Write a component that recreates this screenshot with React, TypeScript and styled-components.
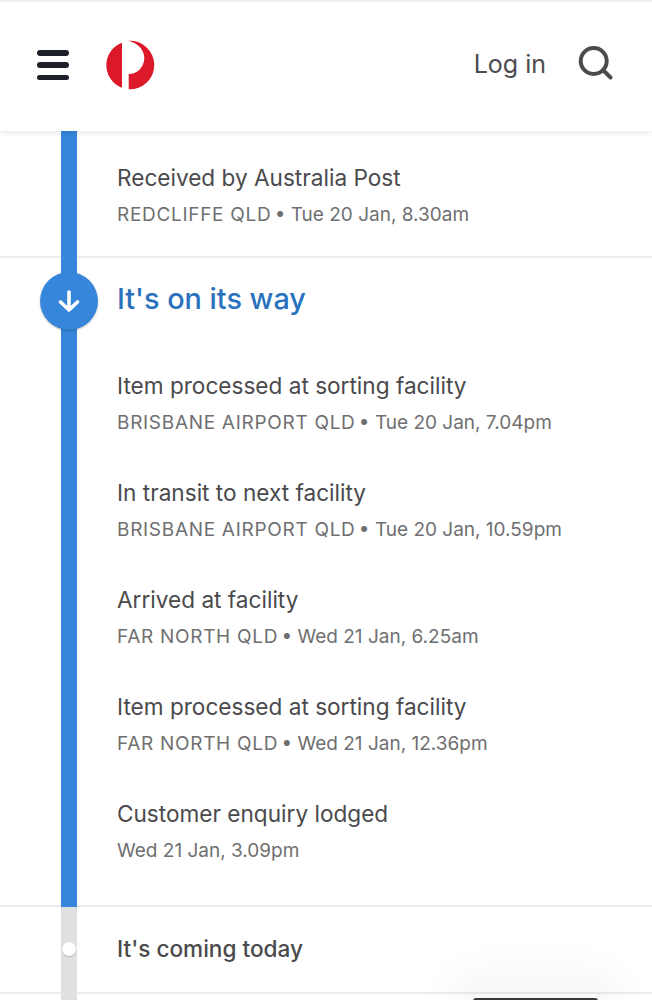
import React from "react";
import styled, { createGlobalStyle } from "styled-components";

const Global = createGlobalStyle`
  html, body { margin: 0; padding: 0; background: #fff; }
  body { font-family: Inter, "Liberation Sans", sans-serif; color: #4a4a4c; }
  #root { width: 652px; height: 1000px; overflow: hidden; position: relative; }
  * { box-sizing: border-box; }
`;

const Page = styled.div`
  width: 652px;
  height: 1000px;
  display: flex;
  flex-direction: column;
  overflow: hidden;
  background: #fff;
`;

const Header = styled.header`
  height: 131px;
  flex: none;
  display: flex;
  align-items: center;
  padding: 0 39px 3px 37px;
  background: #fff;
  border-top: 2px solid #eeeeee;
  box-shadow: 0 2px 6px rgba(0, 0, 0, 0.09);
  position: relative;
  z-index: 2;
`;

const Burger = styled.button`
  width: 32px;
  height: 30px;
  padding: 0;
  border: 0;
  background: none;
  display: flex;
  flex-direction: column;
  justify-content: space-between;
`;

const BurgerBar = styled.span`
  display: block;
  height: 5.5px;
  border-radius: 3px;
  background: #1e2029;
`;

const Logo = styled.svg`
  width: 50px;
  height: 50px;
  margin-left: 36px;
  flex: none;
`;

const HeaderActions = styled.div`
  margin-left: auto;
  margin-bottom: 3px;
  display: flex;
  align-items: center;
  gap: 31px;
`;

const LogIn = styled.span`
  font-size: 25px;
  line-height: 32px;
  color: #4c4c4e;
`;

const SearchIcon = styled.svg`
  width: 36px;
  height: 36px;
  flex: none;
  display: block;
`;

const Section = styled.section<{ $height: number }>`
  display: flex;
  height: ${(p) => p.$height}px;
  flex: none;
  border-bottom: 2px solid #ececec;
`;

const Rail = styled.div<{ $color: string }>`
  width: 16px;
  margin: 0 40px -2px 61px;
  flex: none;
  background: ${(p) => p.$color};
  position: relative;
`;

const RailTail = styled(Rail)`
  flex: 1 0 auto;
`;

const Content = styled.div`
  flex: 1;
  min-width: 0;
  display: flex;
  flex-direction: column;
`;

const Event = styled.div`
  height: 107px;
  flex: none;
  display: flex;
  flex-direction: column;
`;

const EventTitle = styled.div`
  font-size: 22.6px;
  line-height: 30px;
  color: #4a4a4c;
`;

const EventMeta = styled.div`
  margin-top: 8px;
  font-size: 19px;
  line-height: 28px;
  color: #6f6f71;
  white-space: nowrap;
`;

const Place = styled.span`
  letter-spacing: 0.7px;
  margin-right: -2px;
`;

const FirstList = styled.div`
  padding-top: 32px;
`;

const WayList = styled.div`
  padding-top: 113px;
  display: flex;
  flex-direction: column;
  position: relative;
`;

const Heading = styled.h2`
  position: absolute;
  top: 20px;
  left: 0;
  margin: 0;
  font-size: 28.8px;
  line-height: 42px;
  font-weight: 500;
  color: #2a72bd;
`;

const BigMarker = styled.div`
  position: absolute;
  left: -21px;
  top: 14px;
  width: 58px;
  height: 58px;
  border-radius: 50%;
  background: #3686db;
  box-shadow: 0 1px 2px rgba(0, 0, 0, 0.25);
  display: flex;
  align-items: center;
  justify-content: center;
`;

const SmallMarker = styled.div`
  position: absolute;
  left: 1px;
  top: 35px;
  width: 14px;
  height: 14px;
  border-radius: 50%;
  background: #fff;
  box-shadow: 0 1px 1px rgba(0, 0, 0, 0.2);
`;

const TodayContent = styled.div`
  flex: 1;
  display: flex;
  align-items: center;
  padding-bottom: 3px;
  font-size: 22.6px;
  font-weight: 500;
  color: #4a4a4c;
`;

const HomeBar = styled.div`
  position: absolute;
  left: 473px;
  top: 998px;
  width: 125px;
  height: 6px;
  border-radius: 3px;
  background: #3a3a3c;
  box-shadow: 0 -6px 40px 20px rgba(0, 0, 0, 0.04);
`;

type Item = { place?: string; title: string; date: string };

const first: Item = { title: "Received by Australia Post", place: "REDCLIFFE QLD", date: "Tue 20 Jan, 8.30am" };

const items: Item[] = [
  { title: "Item processed at sorting facility", place: "BRISBANE AIRPORT QLD", date: "Tue 20 Jan, 7.04pm" },
  { title: "In transit to next facility", place: "BRISBANE AIRPORT QLD", date: "Tue 20 Jan, 10.59pm" },
  { title: "Arrived at facility", place: "FAR NORTH QLD", date: "Wed 21 Jan, 6.25am" },
  { title: "Item processed at sorting facility", place: "FAR NORTH QLD", date: "Wed 21 Jan, 12.36pm" },
  { title: "Customer enquiry lodged", date: "Wed 21 Jan, 3.09pm" },
];

function Meta({ item }: { item: Item }) {
  return (
    <EventMeta>
      {item.place ? (
        <>
          <Place>{item.place}</Place> •{" "}
        </>
      ) : null}
      {item.date}
    </EventMeta>
  );
}

export default function App() {
  return (
    <Page>
      <Global />
      <Header>
        <Burger aria-label="Menu">
          <BurgerBar />
          <BurgerBar />
          <BurgerBar />
        </Burger>
        <Logo viewBox="0 0 50 50" role="img" aria-label="Australia Post">
          <path fill="#dc1928" d="M17 2.7A24 24 0 0 0 17 47.7Z" />
          <path
            fill="#dc1928"
            d="M23.2 0.8A24.3 24.3 0 1 1 23.7 49.3L23.7 34C33 34 39.5 26 39.3 17.5C39 9 32.2 2.8 23.2 0.8Z"
          />
        </Logo>
        <HeaderActions>
          <LogIn>Log in</LogIn>
          <SearchIcon viewBox="0 0 36 36" fill="none" stroke="#4c4c4e" strokeWidth="4" strokeLinecap="round">
            <circle cx="16.7" cy="15" r="13" />
            <path d="M26 24L33.5 31.5" />
          </SearchIcon>
        </HeaderActions>
      </Header>

      <Section $height={127}>
        <Rail $color="#3686db" />
        <Content>
          <FirstList>
            <EventTitle>{first.title}</EventTitle>
            <Meta item={first} />
          </FirstList>
        </Content>
      </Section>

      <Section $height={649}>
        <Rail $color="#3686db">
          <BigMarker>
            <svg width="24" height="24" viewBox="0 0 24 24" fill="none" stroke="#fff" strokeWidth="3.6" strokeLinecap="round" strokeLinejoin="round">
              <path d="M12 3V21M3.5 13L12 21L20.5 13" />
            </svg>
          </BigMarker>
        </Rail>
        <Content>
          <WayList>
            <Heading>It's on its way</Heading>
            {items.map((it) => (
              <Event key={it.title + it.date}>
                <EventTitle>{it.title}</EventTitle>
                <Meta item={it} />
              </Event>
            ))}
          </WayList>
        </Content>
      </Section>

      <Section $height={87}>
        <Rail $color="#e0e0e0">
          <SmallMarker />
        </Rail>
        <TodayContent>It's coming today</TodayContent>
      </Section>

      <RailTail $color="#e0e0e0" />
      <HomeBar />
    </Page>
  );
}
